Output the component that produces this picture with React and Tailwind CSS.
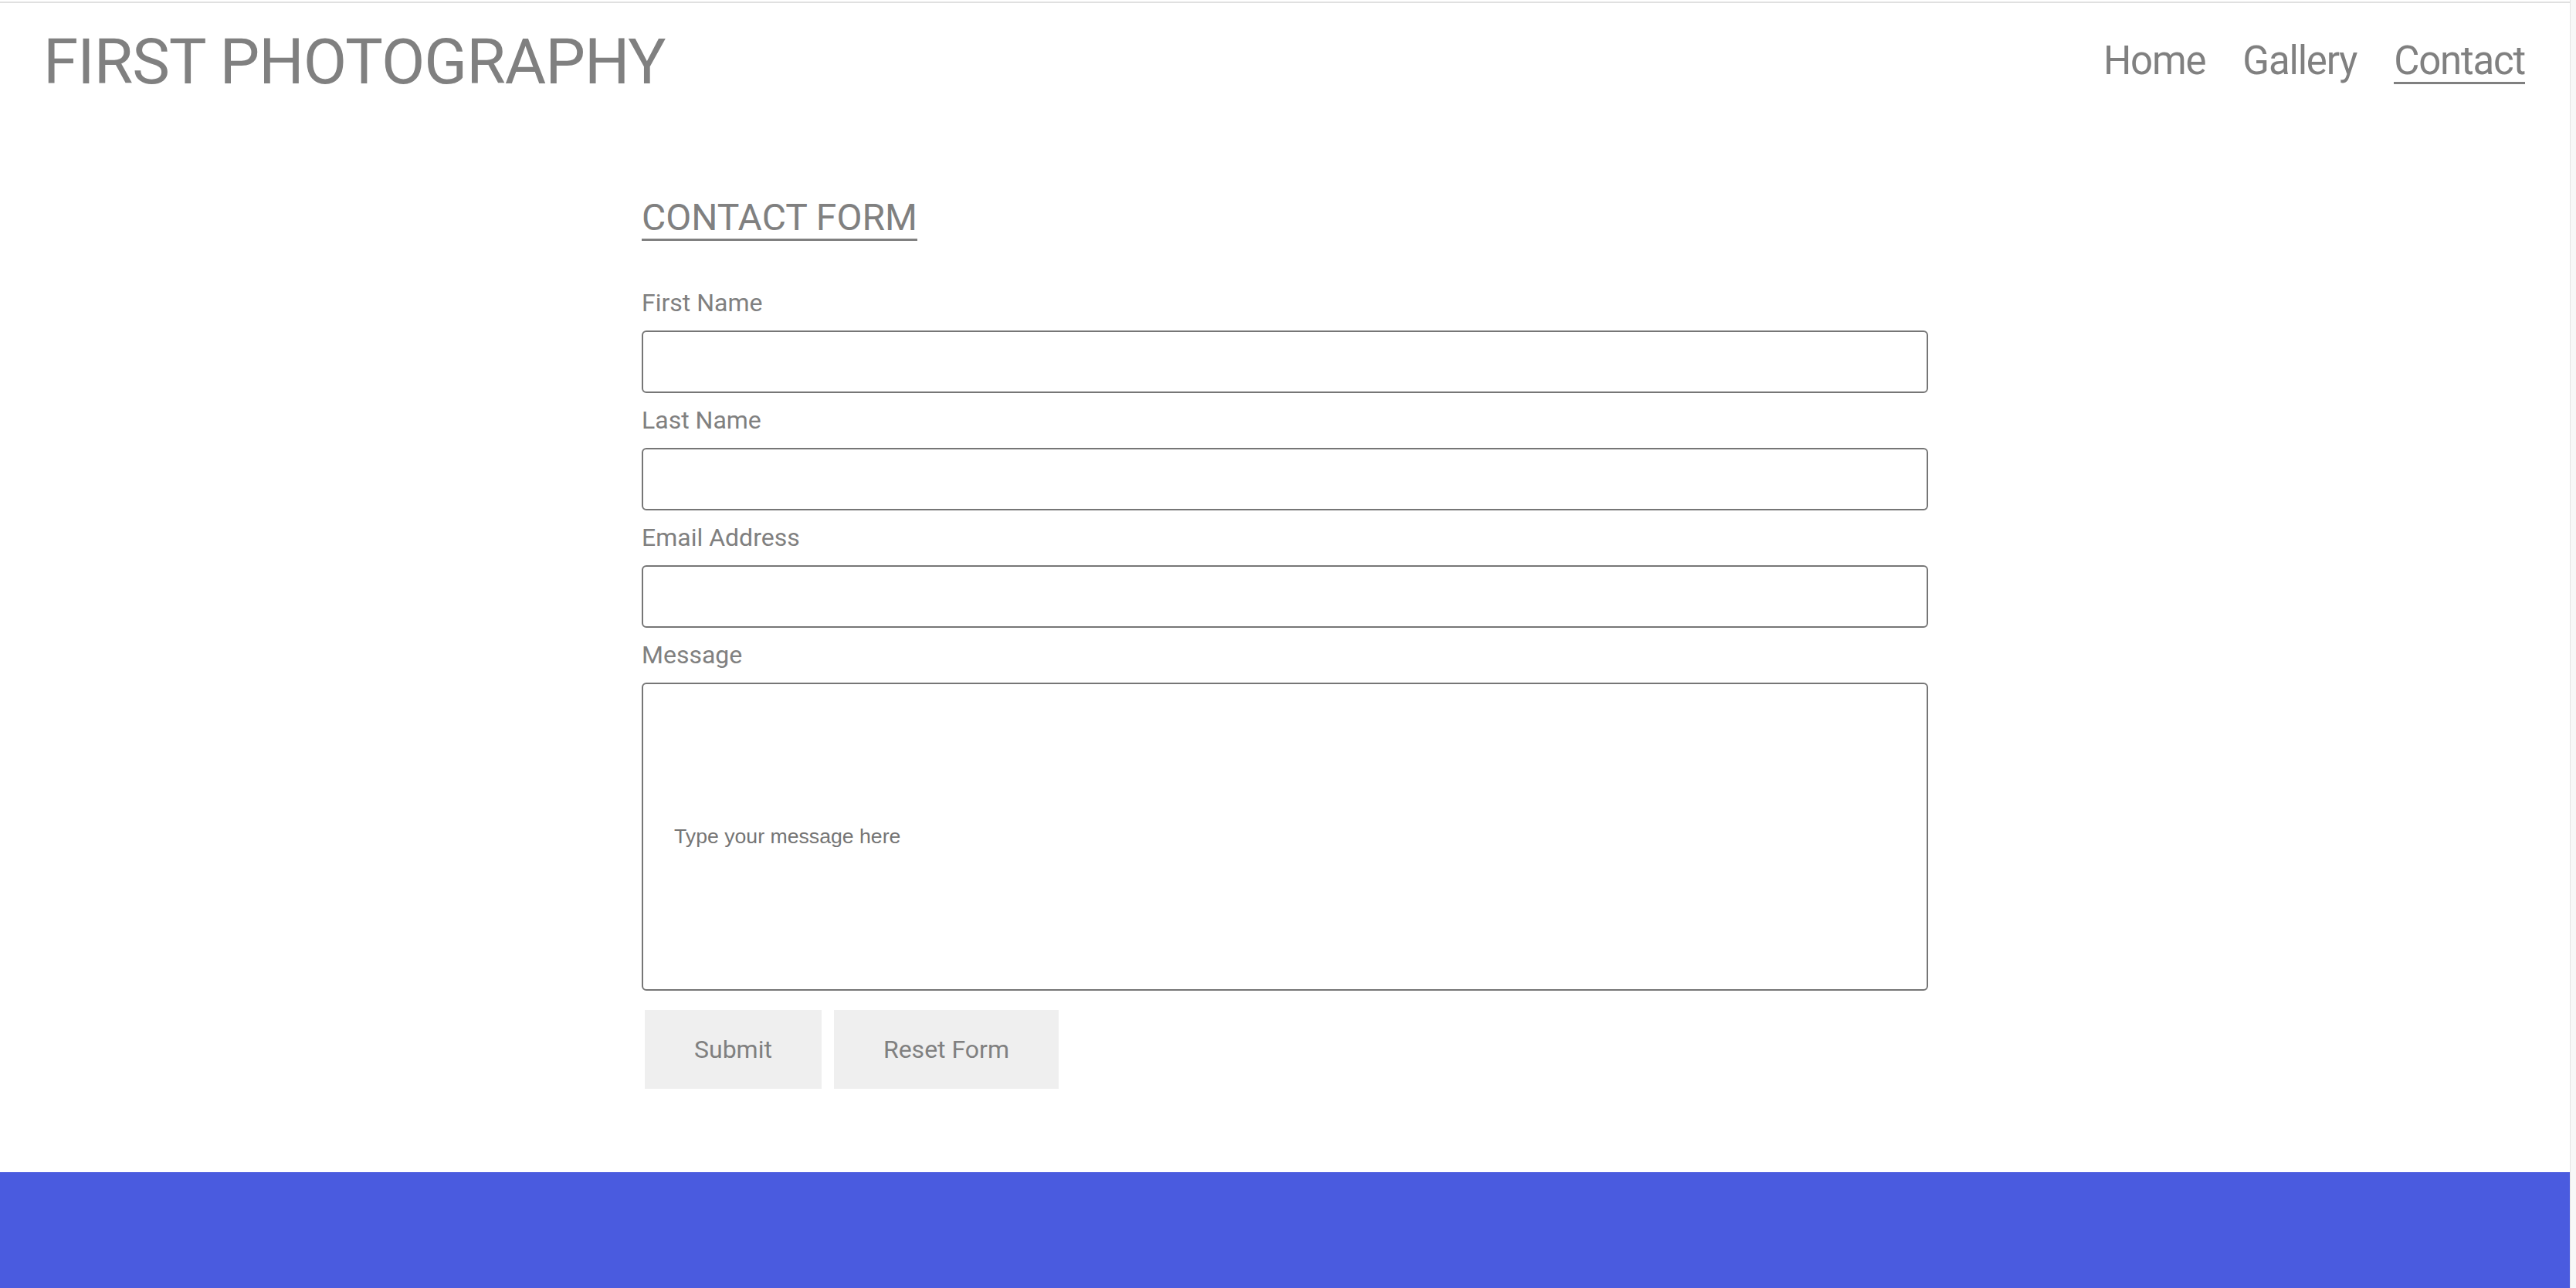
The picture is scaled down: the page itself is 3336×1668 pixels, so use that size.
import React from "react";

const fields = ["First Name", "Last Name", "Email Address"];

const Field = ({ label }) => (
    <div>
        <label className="block text-[32px] leading-[36px] mb-[18px]">{label}</label>
        <input type="text" className="block w-full h-[81px] border-2 border-[#767676] rounded-[6px] bg-white mb-[17px] outline-none" />
    </div>
);

const App = () => {
    return (
        <div className="h-[1668px] w-full overflow-hidden flex bg-white text-[#808080]" style={{ fontFamily: "Roboto, 'Liberation Sans', sans-serif" }}>
            <div className="flex-1 flex flex-col pt-[2px]">
                <header className="border-t-2 border-[#e0e0e0] flex items-start justify-between pl-[56px] pr-[58px] pt-[35px]">
                    <h1 className="text-[82px] leading-none font-normal tracking-[-1px]">FIRST PHOTOGRAPHY</h1>
                    <nav className="flex gap-[48px] mt-[14px] text-[51px] leading-none tracking-[-1.2px]">
                        <a href="#" className="pb-[2px]">Home</a>
                        <a href="#" className="pb-[2px]">Gallery</a>
                        <a href="#" className="pb-[2px] border-b-[3px] border-[#808080]">Contact</a>
                    </nav>
                </header>

                <main className="w-[1666px] mx-auto mt-[137px]">
                    <h2 className="inline-block text-[48px] leading-none pb-[3px] border-b-[3px] border-[#808080] mb-[62px]">CONTACT FORM</h2>
                    <form onSubmit={e => e.preventDefault()}>
                        {fields.map(f => <Field key={f} label={f} />)}
                        <label className="block text-[32px] leading-[36px] mb-[18px]">Message</label>
                        <input
                            type="text"
                            placeholder="Type your message here"
                            className="block w-full h-[399px] border-2 border-[#767676] rounded-[6px] bg-white pl-[40px] text-[26.67px] placeholder:text-[#757575] outline-none"
                            style={{ fontFamily: "'Liberation Sans', Arial, sans-serif" }}
                        />
                        <div className="flex gap-[16px] ml-[4px] mt-[25px]">
                            <button type="submit" className="h-[102px] px-[64px] bg-[#efefef] text-[32px] text-[#808080]">Submit</button>
                            <button type="reset" className="h-[102px] px-[64px] bg-[#efefef] text-[32px] text-[#808080]">Reset Form</button>
                        </div>
                    </form>
                </main>

                <footer className="mt-auto h-[150px] bg-[#4a5bdf]" />
            </div>
            <div className="w-[8px] bg-[#f7f7f7] border-l border-[#e4e4e4]" />
        </div>
    );
};

export default App;
